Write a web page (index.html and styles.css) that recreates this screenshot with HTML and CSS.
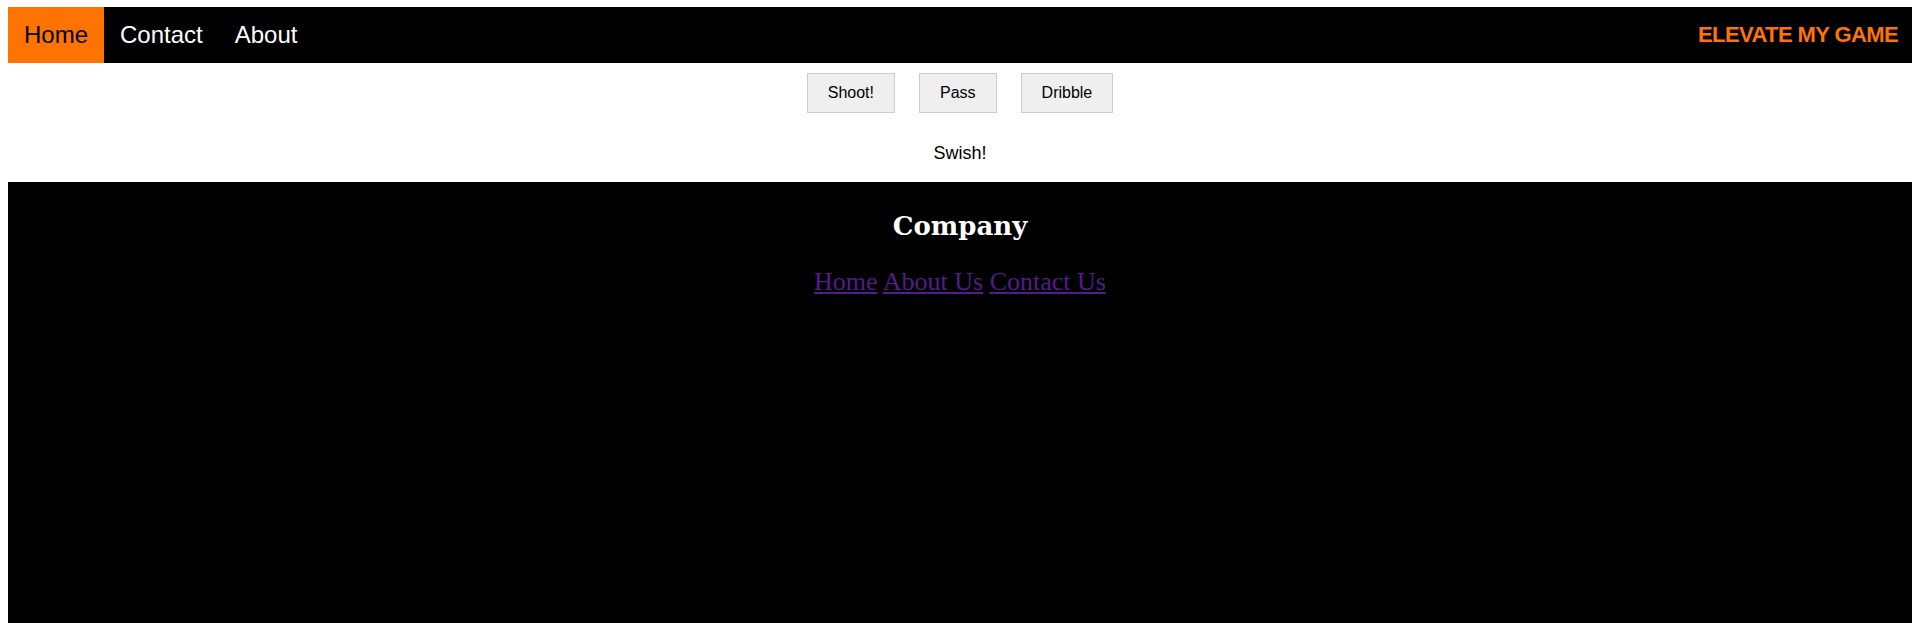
FILE: index.html
```html
<!DOCTYPE html>
<html lang="en">
<head>
<meta charset="utf-8">
<title>Elevate My Game</title>
<link rel="stylesheet" href="styles.css">
</head>
<body>
<nav class="topnav">
  <div class="topnav-links">
    <a class="topnav-link is-active" href="#">Home</a>
    <a class="topnav-link" href="#">Contact</a>
    <a class="topnav-link" href="#">About</a>
  </div>
  <div class="brand">ELEVATE MY GAME</div>
</nav>
<main class="play">
  <div class="actions">
    <button class="action-btn" type="button">Shoot!</button>
    <button class="action-btn" type="button">Pass</button>
    <button class="action-btn" type="button">Dribble</button>
  </div>
  <p class="result">Swish!</p>
</main>
<footer class="site-footer">
  <h2 class="footer-title">Company</h2>
  <div class="footer-links">
    <a class="footer-link" href="#">Home</a> <a class="footer-link" href="#">About Us</a> <a class="footer-link" href="#">Contact Us</a>
  </div>
</footer>
</body>
</html>
```
FILE: styles.css
```css
html, body {
  background: #ffffff;
}
body {
  margin: 7px 0 0 8px;
  font-family: "Liberation Sans", Arial, sans-serif;
  overflow: hidden;
}
.topnav {
  display: flex;
  justify-content: space-between;
  align-items: center;
  background: #000000;
  height: 56px;
}
.topnav-links {
  display: flex;
  height: 100%;
}
.topnav-link {
  display: block;
  padding: 0 16px;
  line-height: 56px;
  font-size: 24px;
  color: #ffffff;
  text-decoration: none;
}
.topnav-link.is-active {
  background: #ff7300;
  color: #000000;
}
.brand {
  padding-right: 14px;
  font-size: 22px;
  letter-spacing: -0.6px;
  font-weight: bold;
  color: #ff7300;
  line-height: 56px;
}
.play {
  display: flex;
  flex-direction: column;
  align-items: center;
}
.actions {
  display: flex;
  justify-content: center;
  gap: 24px;
  margin-top: 10px;
}
.action-btn {
  font-family: "Liberation Sans", Arial, sans-serif;
  font-size: 16px;
  line-height: 18px;
  padding: 10px 20px;
  background: #efefef;
  border: 1px solid #cccccc;
  color: #000000;
  margin: 0;
}
.result {
  margin: 30px 0 19px;
  font-size: 18px;
  line-height: 20px;
  color: #000000;
}
.site-footer {
  background: #000000;
  min-height: 460px;
  text-align: center;
  padding-top: 29px;
  box-sizing: border-box;
}
.footer-title {
  font-family: "DejaVu Serif", Georgia, serif;
  color: #ffffff;
  font-size: 26px;
  line-height: 30px;
  font-weight: bold;
  margin: 0;
}
.footer-links {
  margin-top: 26px;
  font-family: "Liberation Serif", Georgia, serif;
  font-size: 26px;
  line-height: 30px;
}
.footer-link {
  color: #551a8b;
}
```
